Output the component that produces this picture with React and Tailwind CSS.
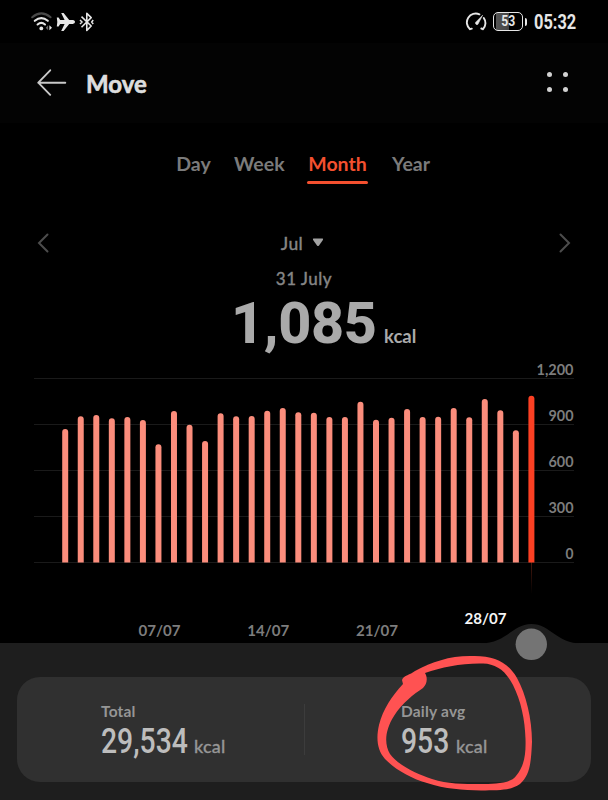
import React from 'react';

const TABS = [
  { label: 'Day', className: 'w-[35px] text-[#7b7b7b]' },
  { label: 'Week', className: 'w-[50px] text-[#7b7b7b]' },
  { label: 'Month', className: 'w-[61px] text-[#f4502f]', active: true },
  { label: 'Year', className: 'w-[40px] text-[#7b7b7b]' },
];

// Active calories for each day of July
const DAYS = [
  871, 953, 962, 940, 949, 930, 771, 988, 899, 792, 973, 953, 956, 990, 1008, 980,
  977, 949, 949, 1049, 931, 944, 1001, 949, 951, 1008, 947, 1066, 993, 862, 1088,
];

const AXIS = [
  { value: 1200, label: '1,200', width: 37 },
  { value: 900, label: '900', width: 25 },
  { value: 600, label: '600', width: 25 },
  { value: 300, label: '300', width: 25 },
  { value: 0, label: '0', width: 8 },
];

const BASELINE = 202.5;
const yFor = (value) => BASELINE - (value / 1200) * 184;

const StatusBar = () => (
  <div className="flex h-[43px] items-center justify-between pl-[31px] pr-[31px] text-[#e6e6e6]">
    <div className="flex items-center">
      {/* Wifi */}
      <svg width="22" height="22" viewBox="0 0 22 22" fill="none">
        <g strokeWidth="2.1" strokeLinecap="round">
          <path d="M1.2 6.2Q10.3-1.5 19.6 6.2" stroke="#4a4a4a" />
          <path d="M3.8 9.8Q10.3 4.4 16.8 9.8M6.6 13.5Q10.3 10.4 14 13.5" stroke="currentColor" />
        </g>
        <circle cx="10.3" cy="17.4" r="1.9" fill="currentColor" />
        <path d="M17.1 14.2v5l-2.4-2.5z" fill="#666" />
        <path d="M18.4 14.2v5l2.6-2.5z" fill="currentColor" />
      </svg>
      {/* Airplane mode */}
      <svg className="ml-[3px]" width="20" height="20" viewBox="0 0 20 20" fill="currentColor">
        <path d="M.8 5.5h1.8l1.6 2.6h4.4L5.2 1.1h2.4l5.6 7h3.7c2.8.2 2.8 3.6 0 3.8h-3.7l-5.6 7H5.2l3.4-7H4.2l-1.6 2.6H.8l.5-4.5z" />
      </svg>
      {/* Bluetooth */}
      <svg className="ml-[3px]" width="16" height="20" viewBox="0 0 16 20" fill="none" stroke="currentColor" strokeWidth="1.6">
        <path d="M2.5 4.6 12.2 14 7.8 18.4V1.4l4.4 4.2-9.7 9.7" strokeLinejoin="round" />
        <path d="m1 8 2 2-2 2M14.2 8l-1.5 2 1.5 2" strokeWidth="1.5" />
      </svg>
    </div>
    <div className="flex items-center">
      {/* Performance gauge */}
      <svg width="22" height="20" viewBox="0 0 22 20" fill="none" stroke="currentColor" strokeWidth="1.9" strokeLinecap="round">
        <path d="M5 17.2A8.9 8.9 0 0 1 14.4 2.3M18.8 6a8.9 8.9 0 0 1-.8 11.2M5 17.2l1.800-.5M18 17.2l-1.700-.7" />
        <path d="M17.4 3.6 12.9 12.3a1.5 1.5 0 0 1-2.3-1.8z" fill="currentColor" strokeWidth=".6" />
      </svg>
      <div className="ml-[6px] flex h-[19px] w-[30px] items-center justify-center rounded-[5px] border-[1.5px] border-current bg-[linear-gradient(90deg,#000_2px,#555_2px,#444_15px,#000_15px)]">
        <span className="inline-block scale-x-[0.84] pt-px font-['Roboto',sans-serif] text-[14.5px] leading-none font-bold">53</span>
      </div>
      <div className="ml-[2px] h-2 w-[2px] rounded-r bg-current" />
      <div className="ml-[7px] w-[43px] pt-[2px]">
        <span className="inline-block origin-left scale-x-[0.8] font-['Roboto',sans-serif] text-[20.5px] leading-none font-bold">
          05:32
        </span>
      </div>
    </div>
  </div>
);

const Header = () => (
  <div className="flex h-20 items-center bg-[#030303] pl-9 pr-10">
    <svg width="32" height="28" viewBox="0 0 32 28" fill="none" stroke="#c9c9c9" strokeWidth="1.9" strokeLinecap="round" strokeLinejoin="round">
      <path d="M14.2 1.3 2.3 13.7l11.900 12.100M2.3 13.7H29.3" />
    </svg>
    <h1 className="ml-[18px] pt-px font-['Lato',sans-serif] text-[24px] leading-none font-bold text-[#dedede] [-webkit-text-stroke:0.6px]">
      Move
    </h1>
    <div className="mb-[2px] ml-auto grid grid-cols-2 gap-x-[11.5px] gap-y-[10px]">
      {[0, 1, 2, 3].map((dot) => (
        <div key={dot} className="size-[5px] rounded-full bg-[#d2d2d2]" />
      ))}
    </div>
  </div>
);

const Tabs = () => (
  <div className="flex h-[61px] items-end justify-center gap-[23px] pr-px font-['Lato',sans-serif] text-[19.5px] leading-none font-bold">
    {TABS.map((tab) => (
      <div key={tab.label} className={tab.className}>
        <span className="block text-center whitespace-nowrap">{tab.label}</span>
        <div className={tab.active ? 'mt-2 h-[3px] rounded-full bg-[#f4502f]' : 'mt-2 h-[3px]'} />
      </div>
    ))}
  </div>
);

const Summary = () => (
  <div className="h-[176px] pt-[49px] font-['Lato',sans-serif]">
    <div className="flex h-5 items-center justify-between px-[37px]">
      <svg width="13" height="20" viewBox="0 0 13 20" fill="none" stroke="#4c4c4c" strokeWidth="2" strokeLinecap="round">
        <path d="M10.5 1.5 2 10l8.5 8.5" />
      </svg>
      <div className="flex items-center gap-[9px] pr-[3px] text-[17.5px] leading-5 font-medium tracking-[0.4px] text-[#858585] [-webkit-text-stroke:0.3px]">
        <span className="pt-[2px]">Jul</span>
        <svg className="mb-[2px]" width="12" height="9" viewBox="0 0 12 9" fill="#a2a2a2">
          <path d="M1.8.6h8.400q1.5 0 .7 1.3L7 7.5q-1 1.2-2 0L1.1 1.9Q.3.6 1.8.6z" />
        </svg>
      </div>
      <svg width="13" height="20" viewBox="0 0 13 20" fill="none" stroke="#4c4c4c" strokeWidth="2" strokeLinecap="round">
        <path d="m2.5 1.5 8.5 8.5-8.5 8.5" />
      </svg>
    </div>
    <div className="mt-4 text-center text-[17px] leading-5 font-medium tracking-[0.5px] text-[#858585] [-webkit-text-stroke:0.3px]">
      31 July
    </div>
    <div className="mt-[8px] flex h-[54px] items-baseline pl-[231px] text-[#aaaaaa]">
      <span className="w-[153px] font-['Roboto',sans-serif] text-[57.5px] leading-[54px] font-extrabold tracking-[-0.4px]">1,085</span>
      <span className="text-[18.5px] leading-none font-bold">kcal</span>
    </div>
  </div>
);

const Chart = () => (
  <svg className="block" width="608" height="283" viewBox="0 0 608 283">
    <defs>
      <linearGradient id="marker" x1="0" y1="0" x2="0" y2="1">
        <stop offset="0" stopColor="#7a2a18" stopOpacity="0.6" />
        <stop offset="1" stopColor="#7a2a18" stopOpacity="0" />
      </linearGradient>
    </defs>
    {AXIS.map((tick) => (
      <path key={tick.value} d={`M34 ${yFor(tick.value)}H574`} stroke="#1a1a1a" />
    ))}
    <rect x="531" y="202" width="1" height="32" fill="url(#marker)" />
    {DAYS.map((kcal, i) => {
      const x = 62.2 + i * 15.54;
      const y = yFor(kcal);
      return (
        <path
          key={i}
          d={`M${x} 202.5V${y + 3}a3 3 0 0 1 6 0V202.5z`}
          fill={i === DAYS.length - 1 ? '#fc4023' : '#fb8d7c'}
        />
      );
    })}
    <g fill="#7d7d7d" fontFamily="Lato, sans-serif" fontSize="15.5" fontWeight="700">
      {AXIS.map((tick) => (
        <text key={tick.value} x={573.5 - tick.width} y={yFor(tick.value) - 3.6} textLength={tick.width} lengthAdjust="spacingAndGlyphs">
          {tick.label}
        </text>
      ))}
      <text x="138.5" y="276.3" textLength="42" lengthAdjust="spacingAndGlyphs">07/07</text>
      <text x="247.3" y="276.3" textLength="42" lengthAdjust="spacingAndGlyphs">14/07</text>
      <text x="356" y="276.3" textLength="42" lengthAdjust="spacingAndGlyphs">21/07</text>
      <text x="464.5" y="263.5" fill="#f5f5f5" textLength="42" lengthAdjust="spacingAndGlyphs">28/07</text>
    </g>
  </svg>
);

const Stat = ({ label, value, valueClass }) => (
  <div className="font-['Lato',sans-serif]">
    <div className="text-[15.5px] leading-[18px] font-bold tracking-[0.2px] whitespace-nowrap text-[#969696]">{label}</div>
    <div className="flex h-[38px] items-baseline text-[#bdbdbd]">
      <div className={valueClass}>
        <span className="inline-block origin-left scale-x-[0.81] font-['Roboto',sans-serif] text-[35px] leading-[44px] font-medium">
          {value}
        </span>
      </div>
      <span className="text-[18px] leading-none font-medium tracking-[0.2px] text-[#969696] [-webkit-text-stroke:0.3px]">kcal</span>
    </div>
  </div>
);

const BottomPanel = () => (
  <div className="relative h-[157px] bg-[#1e1e1e] pt-[34px]">
    {/* Raised notch with the day handle */}
    <svg className="absolute top-[-20px] left-[480px]" width="102" height="40" viewBox="0 0 102 40">
      <path d="M0 20.5C27 20.5 32 1 51.3 1S76 20.5 102 20.5z" fill="#1e1e1e" />
      <circle cx="51.3" cy="21.3" r="15.7" fill="#747474" />
    </svg>
    <div className="mx-[17px] flex h-[105px] rounded-[23px] bg-[#303030] pt-[25px]">
      <div className="w-[287px] pl-[84px]">
        <Stat label="Total" value="29,534" valueClass="w-[93px]" />
      </div>
      <div className="mt-[2px] h-[51px] w-px bg-[#3c3c3c]" />
      <div className="pl-[96px]">
        <Stat label="Daily avg" value="953" valueClass="w-[55px]" />
      </div>
    </div>
    {/* Hand-drawn highlight */}
    <svg className="absolute top-[7px] left-[370px]" width="170" height="150" viewBox="370 650 170 150">
      <path
        fill="#ff5252"
        fillRule="evenodd"
        d="M402 680C404 675 410 675 415 671C432 662 449 656 470 656C493 655 507 661 517 678C526 694 532 719 532 742C531 763 530 775 520 784C510 791 498 790 481 790.5C463 790 445 789 427 783C410 778 396 770 385 759C377 750 376 738 379 725C383 709 392 696 403 684ZM425 673C428 678 427 684 423 688C414 694 402 703 394 716C385 730 384 744 390 754C399 766 417 774 432 779C448 784 463 784 480 784C494 784 510 784 516 776C524 766 526 756 525.5 739C525 720 521 701 513 685C505 670 496 664 483 663.5C462 663 442 667 425 673Z"
      />
    </svg>
  </div>
);

const App = () => (
  <div className="h-[800px] w-[608px] overflow-hidden bg-black">
    <StatusBar />
    <Header />
    <Tabs />
    <Summary />
    <Chart />
    <BottomPanel />
  </div>
);

export default App;
